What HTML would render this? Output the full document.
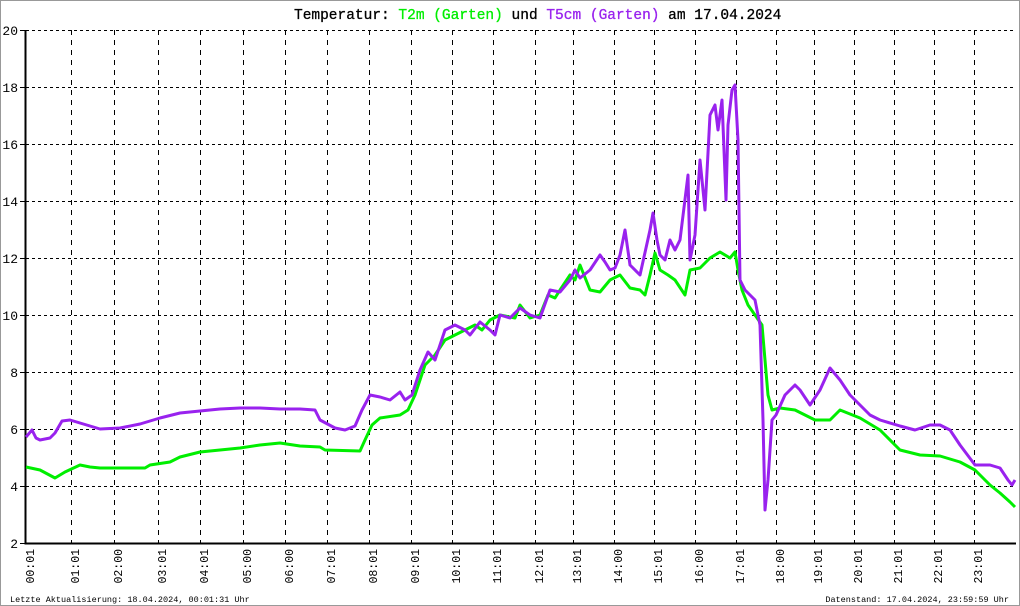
<!DOCTYPE html>
<html><head><meta charset="utf-8"><style>
html,body{margin:0;padding:0;background:#fff}
svg{display:block}
</style></head><body>
<svg width="1020" height="606" xmlns="http://www.w3.org/2000/svg" font-family="Liberation Mono, monospace">
<rect x="0.5" y="0.5" width="1019" height="605" fill="#fff" stroke="#999"/>
<text x="294" y="19" font-size="14.5" fill="#000" stroke="#000" stroke-width="0.3" xml:space="preserve">Temperatur: <tspan fill="#00ee00" stroke="#00ee00">T2m (Garten)</tspan> und <tspan fill="#9922ee" stroke="#9922ee">T5cm (Garten)</tspan> am 17.04.2024</text>
<g stroke="#000" stroke-width="1" stroke-dasharray="3,3" fill="none">
<path d="M26 30.5H1016M26 87.5H1016M26 144.5H1016M26 201.5H1016M26 258.5H1016M26 315.5H1016M26 372.5H1016M26 429.5H1016M26 486.5H1016"/>
</g>
<g stroke="#000" stroke-width="1" stroke-dasharray="5,5" fill="none">
<path d="M71.5 30V543M114.5 30V543M158.5 30V543M200.5 30V543M243.5 30V543M285.5 30V543M327.5 30V543M369.5 30V543M411.5 30V543M452.5 30V543M493.5 30V543M535.5 30V543M573.5 30V543M614.5 30V543M654.5 30V543M695.5 30V543M736.5 30V543M776.5 30V543M814.5 30V543M854.5 30V543M894.5 30V543M934.5 30V543M974.5 30V543"/>
</g>
<path d="M25.5 30V543.5H1016" stroke="#000" stroke-width="2" fill="none"/>
<path d="M20 30.5H26M20 87.5H26M20 144.5H26M20 201.5H26M20 258.5H26M20 315.5H26M20 372.5H26M20 429.5H26M20 486.5H26M20 543.5H26" stroke="#000"/>
<g font-size="13" fill="#000" text-anchor="end">
<text x="18" y="35">20</text><text x="18" y="92">18</text><text x="18" y="149">16</text><text x="18" y="206">14</text><text x="18" y="263">12</text><text x="18" y="320">10</text><text x="18" y="377">8</text><text x="18" y="434">6</text><text x="18" y="491">4</text><text x="18" y="548">2</text>
</g>
<g font-size="11.5" fill="#000" text-anchor="end">
<text transform="translate(34,549) rotate(-90)">00:01</text>
<text transform="translate(79,549) rotate(-90)">01:01</text>
<text transform="translate(122,549) rotate(-90)">02:00</text>
<text transform="translate(166,549) rotate(-90)">03:01</text>
<text transform="translate(208,549) rotate(-90)">04:01</text>
<text transform="translate(251,549) rotate(-90)">05:00</text>
<text transform="translate(293,549) rotate(-90)">06:00</text>
<text transform="translate(335,549) rotate(-90)">07:01</text>
<text transform="translate(377,549) rotate(-90)">08:01</text>
<text transform="translate(419,549) rotate(-90)">09:01</text>
<text transform="translate(460,549) rotate(-90)">10:01</text>
<text transform="translate(501,549) rotate(-90)">11:01</text>
<text transform="translate(543,549) rotate(-90)">12:01</text>
<text transform="translate(581,549) rotate(-90)">13:01</text>
<text transform="translate(622,549) rotate(-90)">14:00</text>
<text transform="translate(662,549) rotate(-90)">15:01</text>
<text transform="translate(703,549) rotate(-90)">16:00</text>
<text transform="translate(744,549) rotate(-90)">17:01</text>
<text transform="translate(784,549) rotate(-90)">18:00</text>
<text transform="translate(822,549) rotate(-90)">19:01</text>
<text transform="translate(862,549) rotate(-90)">20:01</text>
<text transform="translate(902,549) rotate(-90)">21:01</text>
<text transform="translate(942,549) rotate(-90)">22:01</text>
<text transform="translate(982,549) rotate(-90)">23:01</text>
</g>
<text x="10" y="602" font-size="8.5" fill="#000">Letzte Aktualisierung: 18.04.2024, 00:01:31 Uhr</text>
<text x="1009" y="602" font-size="8.5" fill="#000" text-anchor="end">Datenstand: 17.04.2024, 23:59:59 Uhr</text>
<polyline fill="none" stroke="#00ee00" stroke-width="3" stroke-linejoin="round" points="26,467 40,470 55,478 65,472 80,465 90,467 100,468 145,468 150,465 170,462 180,457 200,452 220,450 240,448 260,445 280,443 300,446 320,447 325,450 360,451 365,440 372,425 380,418 400,415 408,410 415,395 425,365 435,355 445,340 455,335 465,330 475,325 482,330 490,320 500,315 515,318 520,305 530,318 540,315 548,295 555,298 560,290 570,275 575,280 580,265 590,290 600,292 610,280 620,275 630,288 640,290 645,295 650,275 655,253 660,270 668,275 675,280 685,295 690,270 700,268 710,258 720,252 730,258 735,252 738,270 742,290 748,305 755,315 762,325 765,360 768,395 772,410 780,408 795,410 815,420 830,420 840,410 860,418 880,430 900,450 920,455 940,456 960,462 975,470 990,485 1000,493 1010,502 1015,507"/>
<polyline fill="none" stroke="#9922ee" stroke-width="3" stroke-linejoin="round" points="26,437 32,430 36,438 40,440 50,438 55,433 62,421 70,420 80,423 90,426 100,429 120,428 140,424 160,418 180,413 200,411 220,409 240,408 260,408 280,409 300,409 315,410 320,420 335,428 345,430 355,426 362,410 370,395 380,397 390,400 400,392 405,400 412,395 420,370 428,352 435,360 445,330 455,325 465,330 470,335 480,322 490,330 495,335 500,315 510,318 520,308 530,315 540,318 550,290 560,292 570,280 575,270 580,278 590,270 600,255 605,262 610,270 615,268 620,255 625,230 630,265 640,275 650,230 653,213 657,240 660,255 665,260 670,240 675,250 680,240 688,175 690,260 695,235 700,160 705,210 710,115 715,105 718,130 722,100 726,200 728,125 732,90 735,85 738,140 740,280 745,290 750,295 755,300 760,325 763,420 765,510 768,480 772,420 776,415 785,395 795,385 800,390 810,405 820,390 830,368 840,380 850,395 860,405 870,415 880,420 900,426 915,430 930,425 940,425 950,430 960,445 975,465 990,465 1000,468 1008,480 1012,485 1015,480"/>
</svg>
</body></html>
